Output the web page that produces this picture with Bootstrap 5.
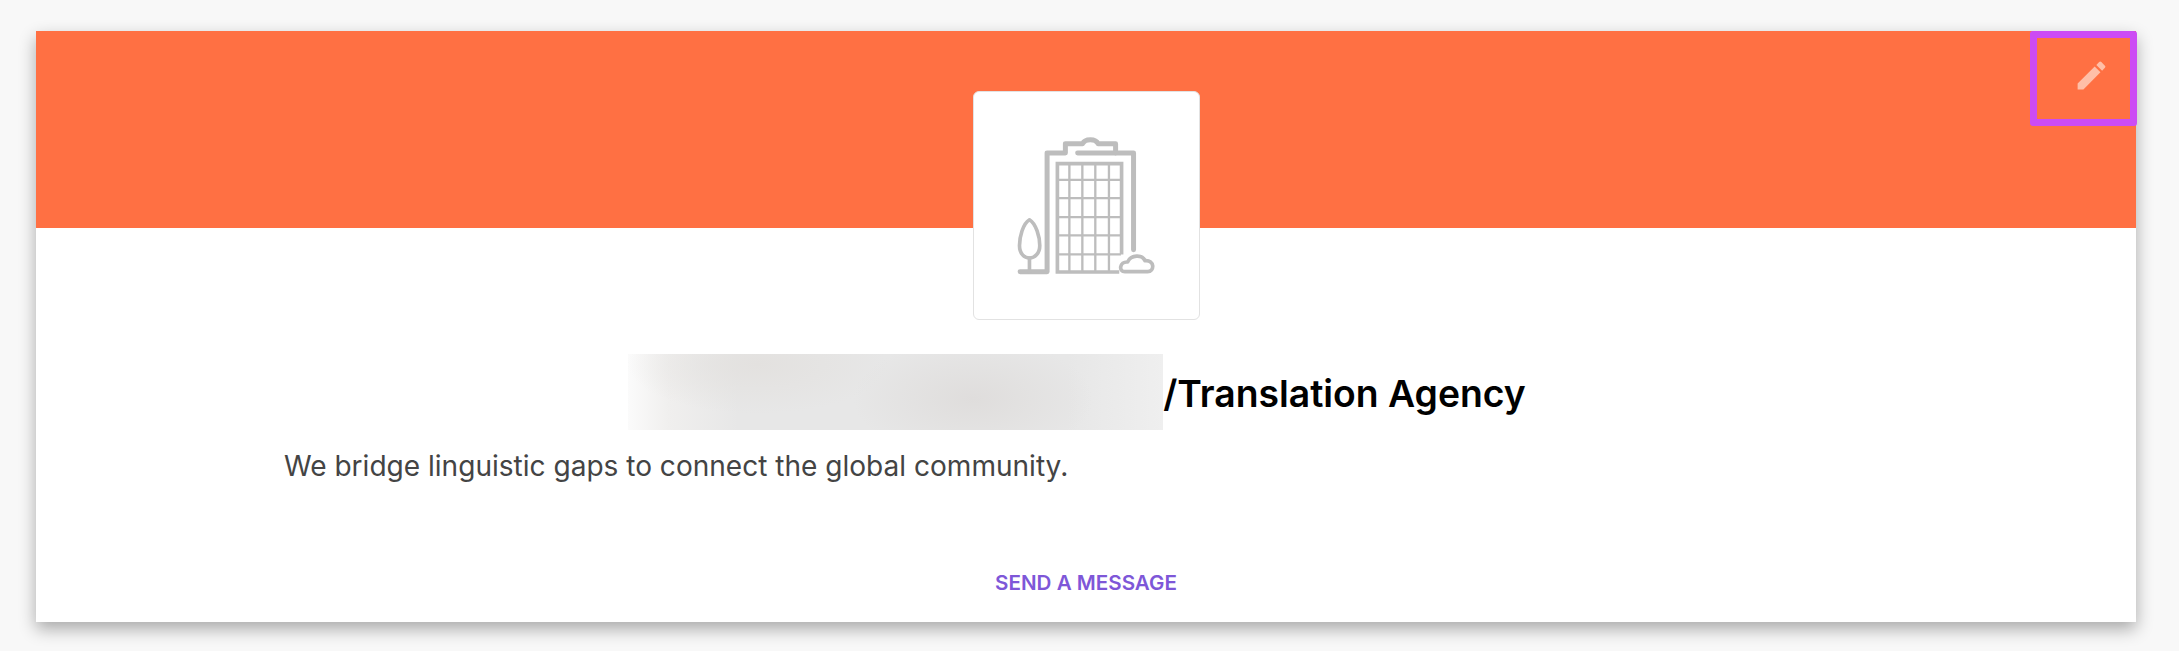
<!DOCTYPE html>
<html lang="en">
<head>
    <meta charset="UTF-8">
    <meta name="viewport" content="width=device-width, initial-scale=1.0">
    <title>Company Profile</title>
    <link href="https://cdn.jsdelivr.net/npm/bootstrap@5.3.0/dist/css/bootstrap.min.css" rel="stylesheet">
    <style>
        html, body { height: 100%; }
        body { background: #f8f8f8; font-family: Inter, "Liberation Sans", sans-serif; padding: 31px 43px 0 36px; }
        .profile-card { height: 591px; border-radius: 0; box-shadow: 0 7px 16px rgba(0, 0, 0, .32); }
        .profile-banner { height: 197px; background: #ff7043; }
        .edit-box { top: 0; right: -1px; width: 107px; height: 95px; border: 7px solid #cc4bf4; border-radius: 3px; background: none; padding: 0 0 6px 15px; }
        .logo-box { width: 227px; height: 229px; margin-top: -137px; border: 1px solid #e2e2e2; border-radius: 6px; }
        .title-row { height: 76px; margin-top: 34px; padding-right: 18px; }
        .blur-box { width: 535px; height: 76px; background:
            radial-gradient(ellipse 120px 60px at 345px 45px, #dfdddc, transparent),
            radial-gradient(ellipse 130px 50px at 130px 10px, #e3e1df, transparent),
            linear-gradient(90deg, #fbfbfb 0, #f0efee 40px, #e7e7e7 110px, #e7e7e7 440px, #efefef 100%); }
        .profile-name { font-size: 37.3px; font-weight: 600; color: #000; margin: 2px 0 0; line-height: 76px; }
        .profile-tagline { font-size: 28.05px; line-height: 40px; color: #444; margin: 16px 0 0 248px; }
        .message-link { font-size: 20.6px; font-weight: 600; line-height: 28px; color: #7e57d8; text-decoration: none; margin-top: 83px; }
    </style>
</head>
<body>
    <div class="card border-0 profile-card position-relative">
        <div class="profile-banner"></div>
        <button class="edit-box position-absolute d-flex align-items-center justify-content-center" type="button" aria-label="Edit">
            <svg width="37" height="37" viewBox="0 0 24 24" fill="#ffbfa8"><path d="M3 17.25V21h3.75L17.81 9.94l-3.75-3.75L3 17.25zM20.71 7.04a1 1 0 0 0 0-1.41l-2.34-2.34a1 1 0 0 0-1.41 0l-1.83 1.83 3.75 3.75 1.83-1.83z"/></svg>
        </button>
        <div class="d-flex flex-column">
            <div class="logo-box bg-white align-self-center d-flex align-items-center justify-content-center">
                <svg width="150" height="143" viewBox="180 160 450 430" fill="none" stroke="#bdbdbd" stroke-linecap="round" stroke-linejoin="round">
                    <g stroke-width="15">
                        <path d="M207 574H288V217H343V189H395Q400 177 418 177Q436 177 441 189H494V217"/>
                        <path d="M380 217H548V508"/>
                    </g>
                    <g stroke-width="11" stroke-linecap="butt" stroke-linejoin="miter">
                        <path d="M319 580V249H512V522M319 575H505"/>
                    </g>
                    <g stroke-width="7" stroke-linecap="butt">
                        <path d="M355 252V575M394 252V575M433 252V575M474 252V575M322 298H510M322 353H510M322 410H510M322 465H510M322 522H510"/>
                    </g>
                    <g stroke-width="11">
                        <path d="M235 418C215 430 205 470 205 495C205 520 220 533 235 533C250 533 266 520 266 495C266 470 255 430 235 418Z"/>
                        <path d="M235 533V574"/>
                        <path d="M522 574C502 574 506 543 530 545C540 522 575 522 582 541C612 538 612 574 590 574Z"/>
                    </g>
                </svg>
            </div>
            <div class="title-row d-flex justify-content-center">
                <div class="blur-box"></div>
                <h1 class="profile-name">/Translation Agency</h1>
            </div>
            <p class="profile-tagline">We bridge linguistic gaps to connect the global community.</p>
            <a class="message-link align-self-center" href="#">SEND A MESSAGE</a>
        </div>
    </div>
    <script src="https://cdn.jsdelivr.net/npm/bootstrap@5.3.0/dist/js/bootstrap.bundle.min.js"></script>
</body>
</html>
